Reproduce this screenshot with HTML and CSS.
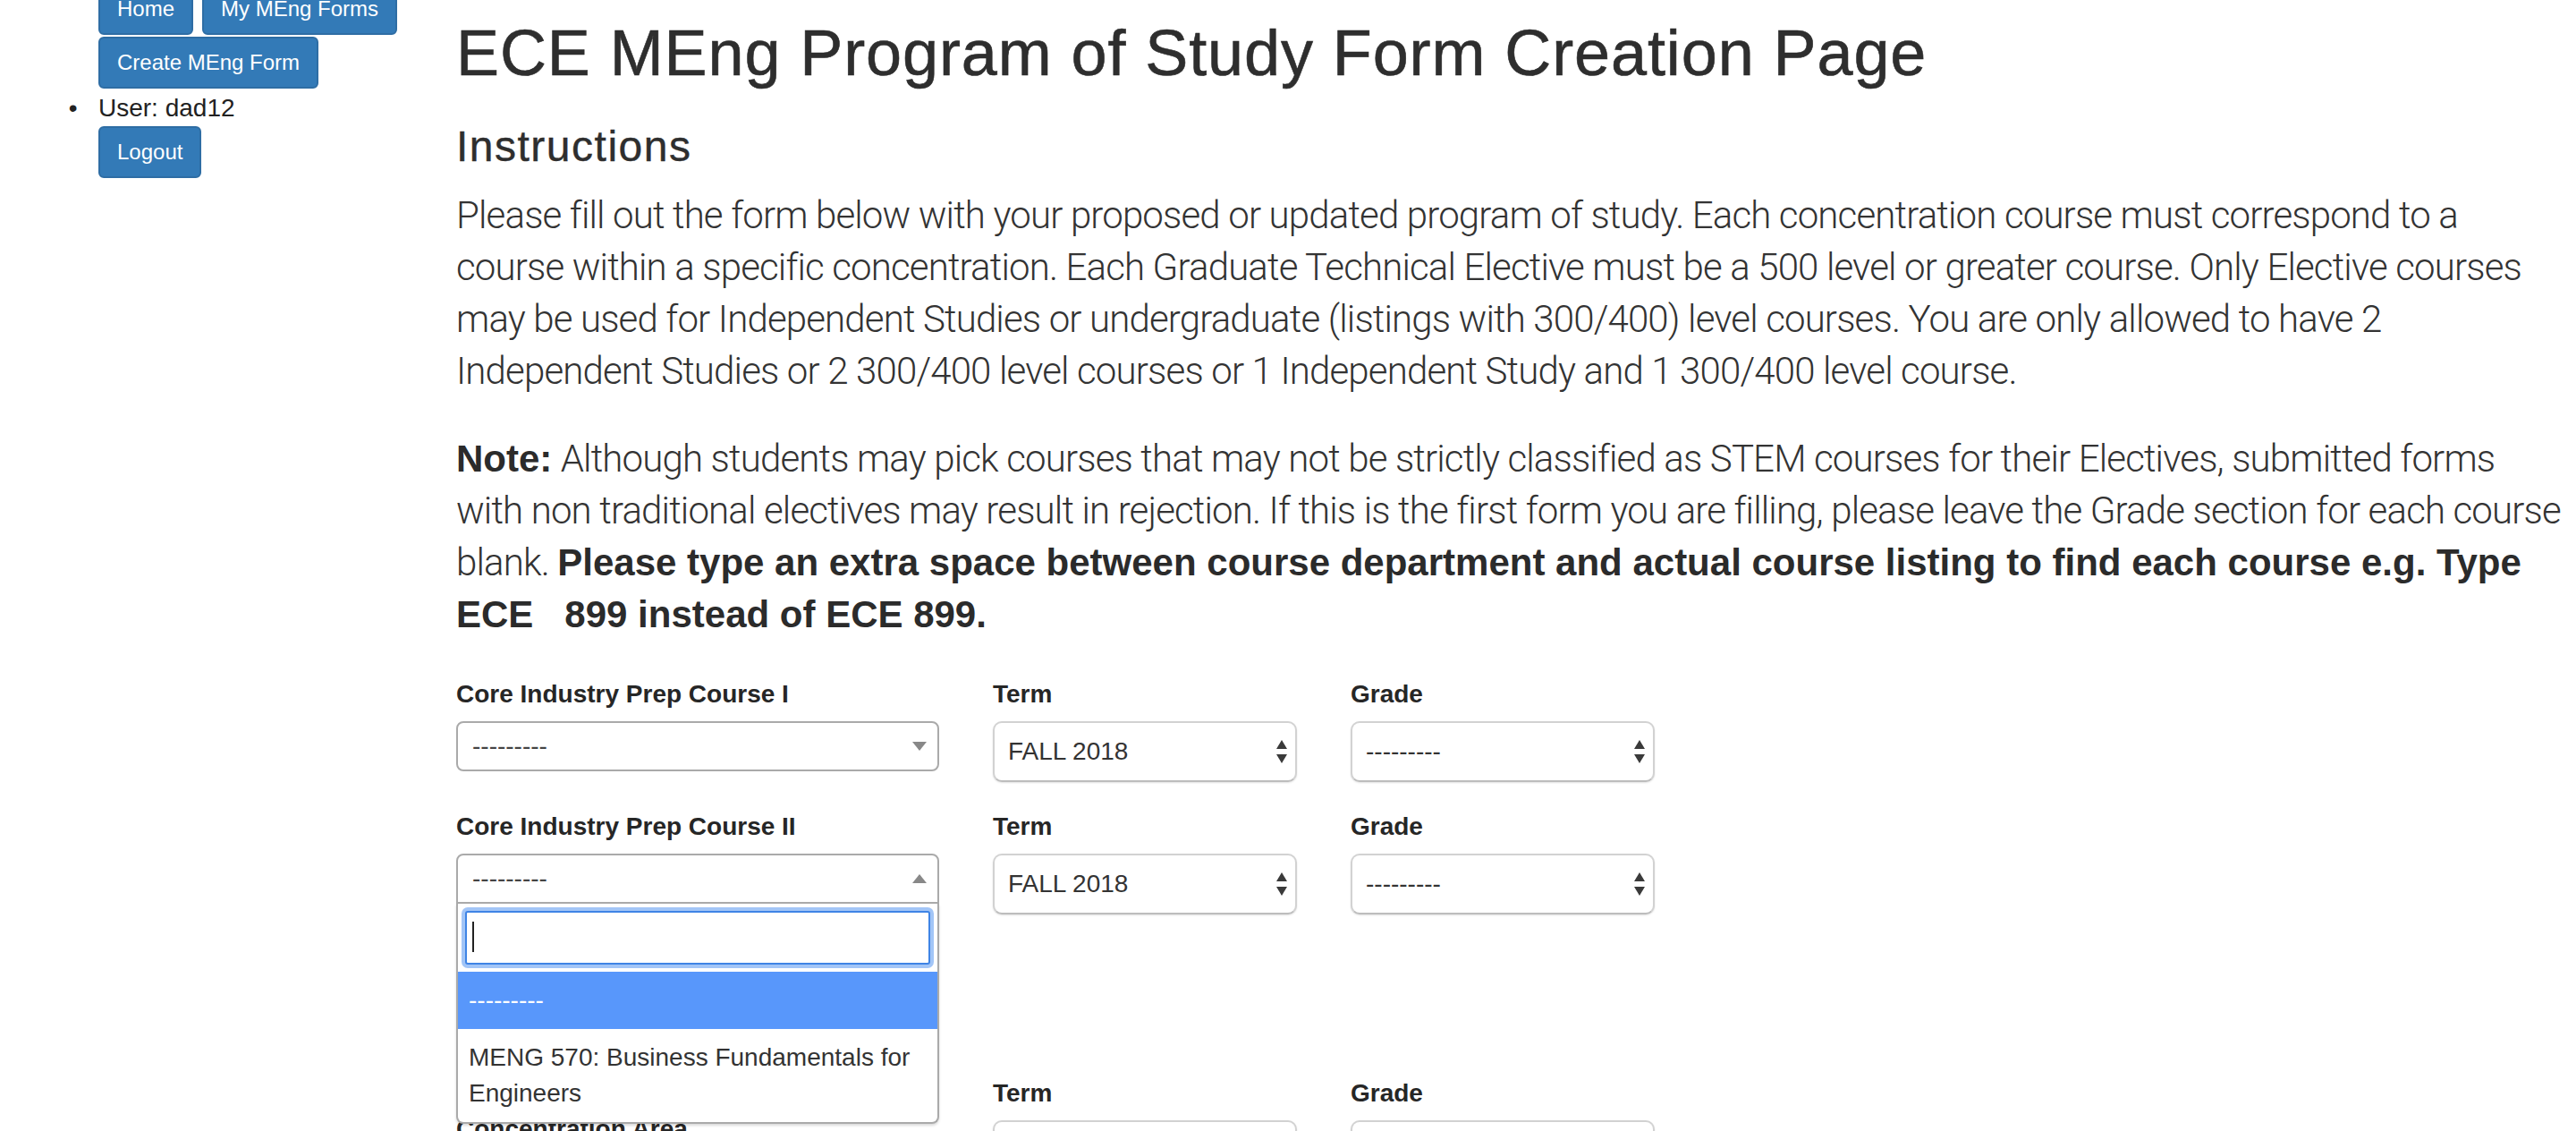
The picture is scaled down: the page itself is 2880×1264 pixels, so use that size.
FILE: index.html
```html
<!DOCTYPE html>
<html lang="en">
<head>
<meta charset="utf-8">
<title>ECE MEng Program of Study Form Creation Page</title>
<link rel="stylesheet" href="styles.css">
</head>
<body>
<div class="page">
  <aside class="sidebar">
    <ul class="nav">
      <li class="nav-buttons">
        <a class="btn" href="#">Home</a>
        <a class="btn" href="#">My MEng Forms</a>
        <a class="btn" href="#">Create MEng Form</a>
      </li>
      <li class="nav-user">User: dad12
        <div><a class="btn" href="#">Logout</a></div>
      </li>
    </ul>
  </aside>

  <main class="main">
    <h1>ECE MEng Program of Study Form Creation Page</h1>
    <h3>Instructions</h3>
    <p class="lead">Please fill out the form below with your proposed or updated program of study. Each concentration course must correspond to a<br>course within a specific concentration. Each Graduate Technical Elective must be a 500 level or greater course. Only Elective courses<br>may be used for Independent Studies or undergraduate (listings with 300/400) level courses. You are only allowed to have 2<br>Independent Studies or 2 300/400 level courses or 1 Independent Study and 1 300/400 level course.</p>
    <p class="lead"><strong>Note:</strong> Although students may pick courses that may not be strictly classified as STEM courses for their Electives, submitted forms<br>with non traditional electives may result in rejection. If this is the first form you are filling, please leave the Grade section for each course<br>blank. <strong>Please type an extra space between course department and actual course listing to find each course e.g. Type<br>ECE &nbsp; 899 instead of ECE 899.</strong></p>

    <form class="form">
      <div class="form-row">
        <div class="field">
          <label>Core Industry Prep Course I</label>
          <div class="s2">
            <div class="s2-sel"><span class="s2-text">---------</span><span class="s2-arrow"></span></div>
          </div>
        </div>
        <div class="field">
          <label>Term</label>
          <div class="nsel"><span>FALL 2018</span><svg class="updown" viewBox="0 0 12 26" width="12" height="26"><polygon points="6,0 12,10 0,10"/><polygon points="0,16 12,16 6,26"/></svg></div>
        </div>
        <div class="field">
          <label>Grade</label>
          <div class="nsel"><span>---------</span><svg class="updown" viewBox="0 0 12 26" width="12" height="26"><polygon points="6,0 12,10 0,10"/><polygon points="0,16 12,16 6,26"/></svg></div>
        </div>
      </div>

      <div class="form-row">
        <div class="field">
          <label>Core Industry Prep Course II</label>
          <div class="s2 s2-open">
            <div class="s2-sel"><span class="s2-text">---------</span><span class="s2-arrow"></span></div>
            <div class="s2-dropdown">
              <div class="s2-search"><div class="s2-input"><span class="s2-caret"></span></div></div>
              <ul class="s2-results">
                <li class="s2-hl">---------</li>
                <li>MENG 570: Business Fundamentals for Engineers</li>
              </ul>
            </div>
          </div>
        </div>
        <div class="field">
          <label>Term</label>
          <div class="nsel"><span>FALL 2018</span><svg class="updown" viewBox="0 0 12 26" width="12" height="26"><polygon points="6,0 12,10 0,10"/><polygon points="0,16 12,16 6,26"/></svg></div>
        </div>
        <div class="field">
          <label>Grade</label>
          <div class="nsel"><span>---------</span><svg class="updown" viewBox="0 0 12 26" width="12" height="26"><polygon points="6,0 12,10 0,10"/><polygon points="0,16 12,16 6,26"/></svg></div>
        </div>
      </div>

      <div class="form-row form-row-concentration">
        <div class="field field-offset">
          <label>Concentration Area</label>
          <div class="s2">
            <div class="s2-sel"><span class="s2-text">---------</span><span class="s2-arrow"></span></div>
          </div>
        </div>
        <div class="field">
          <label>Term</label>
          <div class="nsel"><span>FALL 2018</span><svg class="updown" viewBox="0 0 12 26" width="12" height="26"><polygon points="6,0 12,10 0,10"/><polygon points="0,16 12,16 6,26"/></svg></div>
        </div>
        <div class="field">
          <label>Grade</label>
          <div class="nsel"><span>---------</span><svg class="updown" viewBox="0 0 12 26" width="12" height="26"><polygon points="6,0 12,10 0,10"/><polygon points="0,16 12,16 6,26"/></svg></div>
        </div>
      </div>
    </form>
  </main>
</div>
</body>
</html>
```

FILE: styles.css
```css
* { box-sizing: border-box; }

html, body {
  margin: 0;
  padding: 0;
  height: 1264px;
  overflow: hidden;
  background: #fff;
}

body {
  font-family: "Helvetica Neue", "Liberation Sans", Arial, sans-serif;
  font-size: 28px;
  line-height: 40px;
  color: #333;
}

.page {
  display: grid;
  grid-template-columns: 480px 1fr;
}

/* ---------- sidebar ---------- */
.sidebar {
  padding: 0 30px;
}

.nav {
  margin: -19px 0 0;
  padding: 0 0 0 80px;
  list-style: disc;
  color: #222;
}

.nav-buttons {
  list-style: none;
  display: flex;
  flex-wrap: wrap;
  gap: 2px 10px;
  width: 345px;
}

.nav-user {
  margin-top: 2px;
}

.nav-user::marker {
  content: "\2022\00a0\00a0\00a0";
  color: #222;
}

.btn {
  display: inline-block;
  background: #337ab7;
  border: 2px solid #2e6da4;
  border-radius: 6px;
  color: #fff;
  font-family: "Helvetica Neue", "Liberation Sans", Arial, sans-serif;
  font-size: 24px;
  line-height: 36px;
  padding: 9px 19px;
  text-decoration: none;
  white-space: nowrap;
}

/* ---------- main ---------- */
.main {
  padding: 0 30px;
}

h1 {
  margin: 20px 0 38px;
  font-size: 72px;
  line-height: 79px;
  font-weight: 500;
  letter-spacing: 0.9px;
  color: #2e2e2e;
  -webkit-text-stroke: 0.6px #2e2e2e;
}

h3 {
  margin: 0 0 22px;
  font-size: 48px;
  line-height: 53px;
  font-weight: 500;
  letter-spacing: 1.5px;
  color: #2e2e2e;
  -webkit-text-stroke: 0.4px #2e2e2e;
}

.lead {
  margin: 0 0 40px;
  font-family: Roboto, "Liberation Sans", sans-serif;
  font-weight: 300;
  font-size: 42px;
  line-height: 58px;
  letter-spacing: -0.85px;
  white-space: nowrap;
  color: #333;
}

.lead strong {
  font-family: "Helvetica Neue", "Liberation Sans", Arial, sans-serif;
  font-weight: 700;
  letter-spacing: 0;
  color: #2b2b2b;
}

/* ---------- form ---------- */
.form {
  margin-top: 5px;
}

.form-row {
  display: grid;
  grid-template-columns: 540px 340px 340px;
  column-gap: 60px;
  align-items: start;
  margin-bottom: 30px;
}

.form-row-concentration {
  margin-top: 180px;
}

.field-offset {
  padding-top: 40px;
}

label {
  display: block;
  margin-bottom: 10px;
  font-size: 28px;
  line-height: 40px;
  font-weight: 700;
  color: #262626;
}

/* select2-like control */
.s2 {
  position: relative;
}

.s2-sel {
  position: relative;
  height: 56px;
  border: 2px solid #aaa;
  border-radius: 8px;
  background: #fff;
  padding: 0 40px 0 16px;
  line-height: 52px;
  font-size: 28px;
  color: #444;
}

.s2-arrow {
  position: absolute;
  right: 12px;
  top: 21px;
  width: 0;
  height: 0;
  border-style: solid;
  border-width: 10px 8px 0 8px;
  border-color: #888 transparent transparent transparent;
}

.s2-open .s2-sel {
  border-bottom-left-radius: 0;
  border-bottom-right-radius: 0;
}

.s2-open .s2-arrow {
  border-width: 0 8px 10px 8px;
  border-color: transparent transparent #888 transparent;
}

.s2-dropdown {
  position: absolute;
  top: 100%;
  left: 0;
  right: 0;
  z-index: 10;
  background: #fff;
  border: 2px solid #aaa;
  border-top: none;
  border-radius: 0 0 8px 8px;
  box-shadow: 0 2px 3px rgba(0, 0, 0, 0.15);
}

.s2-search {
  padding: 8px;
}

.s2-input {
  height: 60px;
  border: 2px solid #3f84e5;
  border-radius: 3px;
  box-shadow: 0 0 0 4px rgba(86, 150, 240, 0.55);
  padding: 10px 6px;
  background: #fff;
}

.s2-caret {
  display: block;
  width: 2px;
  height: 34px;
  background: #222;
}

.s2-results {
  list-style: none;
  margin: 0;
  padding: 0;
  font-size: 28px;
  line-height: 40px;
  color: #333;
}

.s2-results li {
  padding: 12px 12px;
}

.s2-results .s2-hl {
  background: #5897fb;
  color: #fff;
}

/* native-like select */
.nsel {
  position: relative;
  height: 68px;
  border: 2px solid #d2d2d2;
  border-bottom-color: #bdbdbd;
  border-radius: 10px;
  background: #fff;
  box-shadow: 0 1px 2px rgba(0, 0, 0, 0.12);
  padding: 0 40px 0 15px;
  line-height: 64px;
  font-size: 28px;
  color: #333;
}

.updown {
  position: absolute;
  right: 9px;
  top: 19px;
  fill: #3a3a3a;
}
```
